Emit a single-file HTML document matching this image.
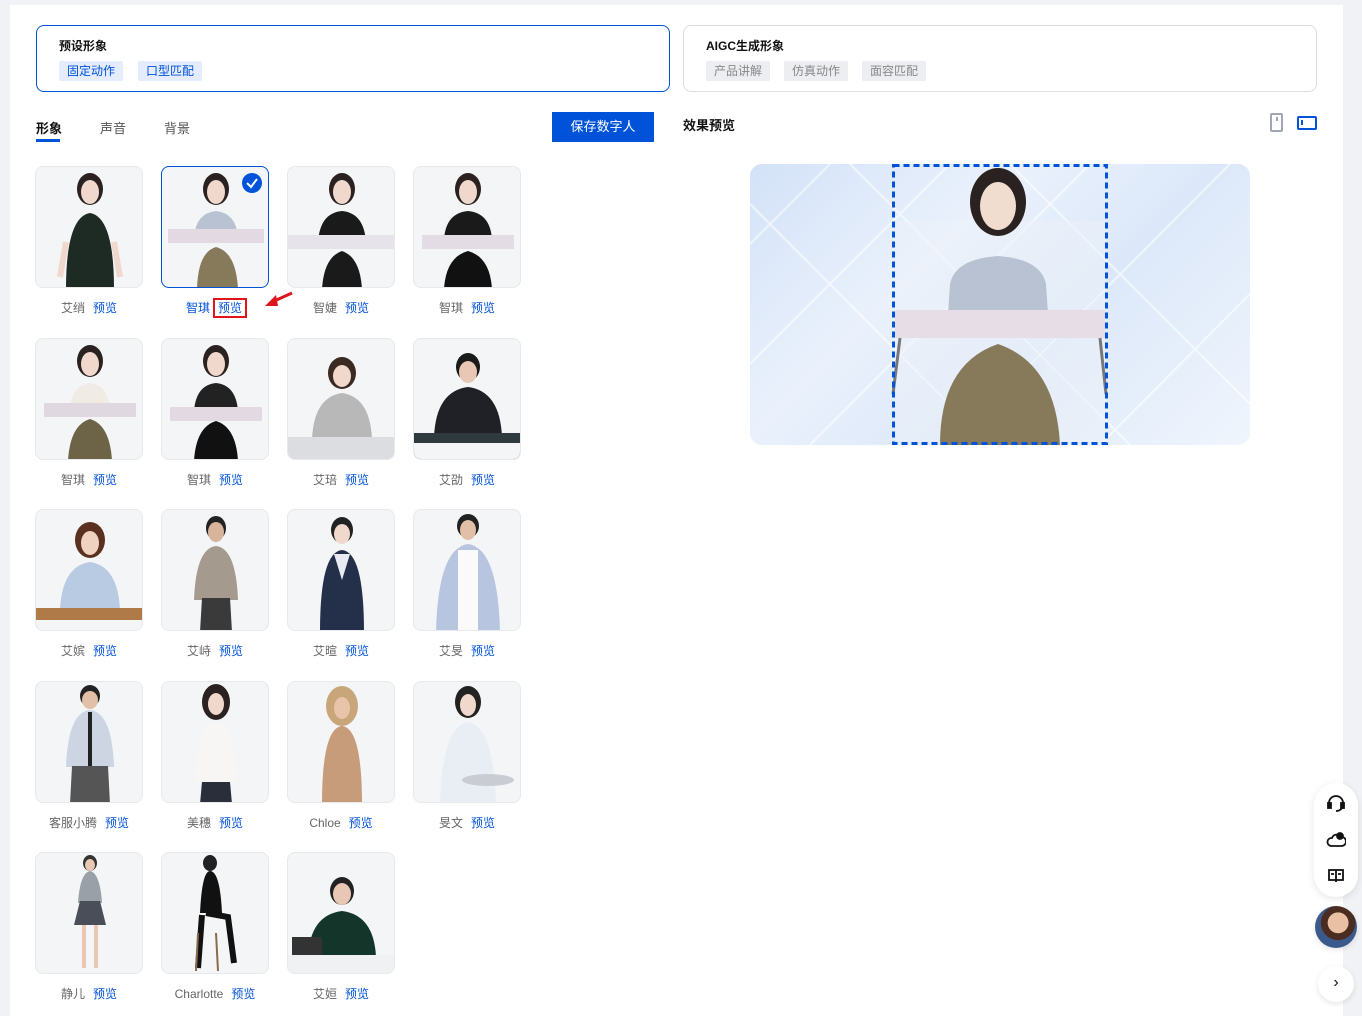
<!DOCTYPE html>
<html><head><meta charset="utf-8"><style>
*{margin:0;padding:0;box-sizing:border-box}
body{width:1362px;height:1016px;background:#f0f2f5;font-family:"Liberation Sans","Noto Sans CJK SC",sans-serif;position:relative;overflow:hidden;font-size:12px;color:#333}
.panel{position:absolute;left:10px;top:5px;width:1333px;height:1011px;background:#fff}
.a{position:absolute}
.box{border-radius:8px;border:1px solid #ddd}
.tag{position:absolute;height:20px;line-height:20px;padding:0 8px;font-size:12px;border-radius:2px}
.card{position:absolute;width:108px;height:122px;border-radius:8px;background:#f4f5f7;border:1px solid #e8e9ec;overflow:hidden}
.lab{position:absolute;width:140px;text-align:center;font-size:12px;color:#666}
.lab b{font-weight:normal;color:#0052d9;margin-left:8px}
</style></head><body>
<div class="panel"></div>

<div class="a box" style="left:36px;top:25px;width:634px;height:67px;border-color:#0052d9"></div>
<div class="a" style="left:59px;top:37px;font-size:12px;font-weight:bold;color:#111">预设形象</div>
<div class="tag" style="left:59px;top:61px;background:#e4ecfd;color:#0052d9">固定动作</div>
<div class="tag" style="left:138px;top:61px;background:#e4ecfd;color:#0052d9">口型匹配</div>

<div class="a box" style="left:683px;top:25px;width:634px;height:67px"></div>
<div class="a" style="left:706px;top:37px;font-size:12px;font-weight:bold;color:#111">AIGC生成形象</div>
<div class="tag" style="left:706px;top:61px;background:#eceef2;color:#888">产品讲解</div>
<div class="tag" style="left:784px;top:61px;background:#eceef2;color:#888">仿真动作</div>
<div class="tag" style="left:862px;top:61px;background:#eceef2;color:#888">面容匹配</div>

<div class="a" style="left:36px;top:118px;font-size:13px;color:#111;font-weight:bold">形象</div>
<div class="a" style="left:36px;top:139px;width:24px;height:3px;background:#0052d9"></div>
<div class="a" style="left:100px;top:118px;font-size:13px;color:#555">声音</div>
<div class="a" style="left:164px;top:118px;font-size:13px;color:#555">背景</div>
<div class="a" style="left:552px;top:112px;width:102px;height:30px;background:#0052d9;color:#fff;text-align:center;line-height:30px;font-size:13px">保存数字人</div>

<div class="a" style="left:683px;top:115px;font-size:13px;font-weight:bold;color:#111">效果预览</div>
<div class="a" style="left:1270px;top:113px;width:13px;height:19px;border:2px solid #a0a6b2;border-radius:2px"><div style="width:2px;height:4px;background:#a0a6b2;margin:2px auto"></div></div>
<div class="a" style="left:1297px;top:116px;width:20px;height:14px;border:2px solid #0052d9;border-radius:2px"><div style="width:2px;height:5px;background:#0052d9;margin:2px 0 0 2px"></div></div>

<!-- preview -->
<div class="a" style="left:750px;top:164px;width:500px;height:281px;border-radius:12px;overflow:hidden;background:linear-gradient(135deg,#d3e2f8 0%,#eaf1fc 35%,#dce8f9 60%,#f0f5fd 100%)">
<svg width="500" height="281" style="position:absolute;left:0;top:0">
<g stroke="#fff" stroke-opacity=".6" fill="none" stroke-width="2">
<path d="M0 80 L80 0 M0 200 L200 0 M60 281 L340 0 M200 281 L480 0 M350 281 L500 130 M0 40 L240 281 M100 0 L380 281 M260 0 L500 240"/></g>
<rect x="146" y="57" width="210" height="224" fill="#eef2f8" opacity=".5"/>
<ellipse cx="248" cy="38" rx="28" ry="34" fill="#2a2220"/>
<ellipse cx="248" cy="42" rx="18" ry="24" fill="#f1dcd0"/>
<path d="M200 120 Q205 95 248 92 Q291 95 296 120 L298 150 L198 150 Z" fill="#b9c2d2"/>
<rect x="145" y="146" width="210" height="28" fill="#e7dde6"/>
<path d="M190 281 Q190 200 248 180 Q306 200 310 281 Z" fill="#867a5a"/>
<path d="M150 174 L143 230 M350 174 L356 230" stroke="#777" stroke-width="3"/>
<rect x="143.5" y="1.5" width="213" height="278" fill="none" stroke="#0052d9" stroke-width="3" stroke-dasharray="6 4"/>
</svg></div>

<!-- cards -->
<svg width="0" height="0" style="position:absolute"><defs>
<g id="p"><ellipse cx="54" cy="22" rx="13" ry="16" fill="#2a2220"/><ellipse cx="54" cy="25" rx="9" ry="12" fill="#f0d8cc"/></g>
</defs></svg>

<div class="card" style="left:35px;top:166px"><svg width="108" height="122"><use href="#p"/><path d="M30 122 Q30 50 54 46 Q78 50 78 122Z" fill="#1e2a24"/><path d="M30 75 L24 110 M78 75 L84 110" stroke="#f0d8cc" stroke-width="6"/></svg></div>
<div class="card" style="left:161px;top:166px;border:1.5px solid #0052d9"><svg width="108" height="122"><use href="#p"/><path d="M32 70 Q34 46 54 44 Q74 46 76 70Z" fill="#b9c2d2"/><rect x="6" y="62" width="96" height="14" fill="#e3d9e2"/><path d="M35 122 Q36 85 54 80 Q74 85 76 122Z" fill="#867a5a"/><circle cx="90" cy="16" r="10" fill="#0052d9"/><path d="M85 16 L89 20 L95 12" stroke="#fff" stroke-width="2" fill="none"/></svg></div>
<div class="card" style="left:287px;top:166px"><svg width="108" height="122"><use href="#p"/><path d="M30 75 Q32 46 54 44 Q76 46 78 75Z" fill="#1a1a1a"/><rect x="0" y="68" width="108" height="14" fill="#e6e3ea"/><path d="M34 122 Q36 90 54 84 Q72 90 74 122Z" fill="#1a1a1a"/></svg></div>
<div class="card" style="left:413px;top:166px"><svg width="108" height="122"><use href="#p"/><path d="M30 72 Q32 46 54 44 Q76 46 78 72Z" fill="#1a1a1a"/><rect x="8" y="68" width="92" height="14" fill="#e3dce4"/><path d="M30 122 Q32 90 54 84 Q76 90 78 122Z" fill="#111"/></svg></div>

<div class="card" style="left:35px;top:338px"><svg width="108" height="122"><use href="#p"/><path d="M34 70 Q36 46 54 44 Q72 46 74 70Z" fill="#f1ebe6"/><rect x="8" y="64" width="92" height="14" fill="#e0d8e0"/><path d="M32 122 Q34 86 54 80 Q74 86 76 122Z" fill="#6d6447"/></svg></div>
<div class="card" style="left:161px;top:338px"><svg width="108" height="122"><use href="#p"/><path d="M32 72 Q34 46 54 44 Q74 46 76 72Z" fill="#222"/><rect x="8" y="68" width="92" height="14" fill="#e3d9e2"/><path d="M32 122 Q34 88 54 82 Q74 88 76 122Z" fill="#111"/></svg></div>
<div class="card" style="left:287px;top:338px"><svg width="108" height="122"><ellipse cx="54" cy="34" rx="14" ry="16" fill="#3a2a22"/><ellipse cx="54" cy="37" rx="9" ry="11" fill="#f0d8cc"/><path d="M24 100 Q26 58 54 54 Q82 58 84 100Z" fill="#b8b8b8"/><rect x="0" y="98" width="108" height="24" fill="#dcdde0"/></svg></div>
<div class="card" style="left:413px;top:338px"><svg width="108" height="122"><ellipse cx="54" cy="28" rx="12" ry="14" fill="#1a1a1a"/><ellipse cx="54" cy="33" rx="9" ry="11" fill="#e8c8b4"/><path d="M20 98 Q22 52 54 48 Q86 52 88 98Z" fill="#1f2126"/><rect x="0" y="94" width="108" height="28" fill="#2f3a3e"/><rect x="0" y="104" width="108" height="18" fill="#f4f5f7"/></svg></div>

<div class="card" style="left:35px;top:509px"><svg width="108" height="122"><ellipse cx="54" cy="30" rx="15" ry="18" fill="#5a3020"/><ellipse cx="54" cy="33" rx="9" ry="12" fill="#f0d2c0"/><path d="M24 100 Q26 56 54 52 Q82 56 84 100Z" fill="#b9cbe3"/><rect x="0" y="98" width="108" height="12" fill="#b07a48"/></svg></div>
<div class="card" style="left:161px;top:509px"><svg width="108" height="122"><ellipse cx="54" cy="18" rx="10" ry="12" fill="#222"/><ellipse cx="54" cy="22" rx="8" ry="10" fill="#d9b49c"/><path d="M32 90 Q34 38 54 36 Q74 38 76 90Z" fill="#a59a8e"/><path d="M38 122 L40 88 L68 88 L70 122Z" fill="#3a3a3a"/></svg></div>
<div class="card" style="left:287px;top:509px"><svg width="108" height="122"><ellipse cx="54" cy="20" rx="11" ry="13" fill="#222"/><ellipse cx="54" cy="24" rx="8" ry="10" fill="#f0d8cc"/><path d="M32 122 Q32 42 54 40 Q76 42 76 122Z" fill="#24304a"/><path d="M46 44 L54 70 L62 44Z" fill="#e8ecf2"/></svg></div>
<div class="card" style="left:413px;top:509px"><svg width="108" height="122"><ellipse cx="54" cy="16" rx="11" ry="12" fill="#222"/><ellipse cx="54" cy="20" rx="8" ry="10" fill="#e2c0a8"/><path d="M22 122 Q24 38 54 34 Q84 38 86 122Z" fill="#b7c5e0"/><rect x="44" y="40" width="20" height="82" fill="#fafafa"/></svg></div>

<div class="card" style="left:35px;top:681px"><svg width="108" height="122"><ellipse cx="54" cy="14" rx="10" ry="11" fill="#222"/><ellipse cx="54" cy="18" rx="8" ry="9" fill="#e2c0a8"/><path d="M30 85 Q32 30 54 28 Q76 30 78 85Z" fill="#cdd5e3"/><rect x="52" y="30" width="4" height="55" fill="#222"/><path d="M34 122 L36 84 L72 84 L74 122Z" fill="#555"/></svg></div>
<div class="card" style="left:161px;top:681px"><svg width="108" height="122"><ellipse cx="54" cy="20" rx="14" ry="18" fill="#2a2220"/><ellipse cx="54" cy="22" rx="8" ry="11" fill="#f0d8cc"/><path d="M34 100 Q34 42 54 40 Q74 42 74 100Z" fill="#f8f6f4"/><path d="M38 122 L40 100 L68 100 L70 122Z" fill="#2a2d3a"/></svg></div>
<div class="card" style="left:287px;top:681px"><svg width="108" height="122"><ellipse cx="54" cy="24" rx="16" ry="20" fill="#c8a67a"/><ellipse cx="54" cy="26" rx="8" ry="11" fill="#e8c4aa"/><path d="M34 122 Q34 46 54 44 Q74 46 74 122Z" fill="#c79c7a"/></svg></div>
<div class="card" style="left:413px;top:681px"><svg width="108" height="122"><ellipse cx="54" cy="20" rx="13" ry="16" fill="#222"/><ellipse cx="54" cy="23" rx="8" ry="11" fill="#f0d8cc"/><path d="M26 122 Q28 44 54 40 Q80 44 82 122Z" fill="#e9eef4"/><ellipse cx="74" cy="98" rx="26" ry="6" fill="#c9ccd2"/></svg></div>

<div class="card" style="left:35px;top:852px"><svg width="108" height="122"><ellipse cx="54" cy="10" rx="7" ry="8" fill="#333"/><ellipse cx="54" cy="12" rx="5" ry="6" fill="#e8c8b4"/><path d="M42 50 Q44 20 54 18 Q64 20 66 50Z" fill="#9aa0a8"/><path d="M38 72 L44 48 L64 48 L70 72Z" fill="#4a4e58"/><path d="M48 72 L48 115 M60 72 L60 115" stroke="#e8c8b4" stroke-width="4"/></svg></div>
<div class="card" style="left:161px;top:852px"><svg width="108" height="122"><ellipse cx="48" cy="10" rx="7" ry="8" fill="#222"/><path d="M38 60 Q40 18 48 18 Q58 18 60 60Z" fill="#111"/><path d="M44 60 L66 64 L72 110 M40 62 L36 115" stroke="#111" stroke-width="6" fill="none"/><path d="M36 80 L34 118 M54 80 L56 118" stroke="#8a6a4a" stroke-width="2"/></svg></div>
<div class="card" style="left:287px;top:852px"><svg width="108" height="122"><ellipse cx="54" cy="38" rx="12" ry="14" fill="#222"/><ellipse cx="54" cy="41" rx="9" ry="11" fill="#e8c8b4"/><path d="M20 104 Q22 62 54 58 Q86 62 88 104Z" fill="#14352a"/><rect x="4" y="84" width="30" height="20" fill="#333"/><rect x="0" y="102" width="108" height="20" fill="#f0f1f3"/></svg></div>

<div class="lab" style="left:19px;top:299px">艾绡<b>预览</b></div>
<div class="lab" style="left:145px;top:299px"><span style="color:#0052d9">智琪</span><b style="outline:2px solid #e0141d;outline-offset:1px;padding:0 2px;margin-left:6px">预览</b></div>
<svg class="a" style="left:262px;top:290px" width="32" height="20"><path d="M30 3 L10 12" stroke="#e0141d" stroke-width="3"/><path d="M3 16 L14 5 L16 16Z" fill="#e0141d"/></svg>
<div class="lab" style="left:271px;top:299px">智婕<b>预览</b></div>
<div class="lab" style="left:397px;top:299px">智琪<b>预览</b></div>
<div class="lab" style="left:19px;top:471px">智琪<b>预览</b></div>
<div class="lab" style="left:145px;top:471px">智琪<b>预览</b></div>
<div class="lab" style="left:271px;top:471px">艾琣<b>预览</b></div>
<div class="lab" style="left:397px;top:471px">艾劭<b>预览</b></div>
<div class="lab" style="left:19px;top:642px">艾嫔<b>预览</b></div>
<div class="lab" style="left:145px;top:642px">艾峙<b>预览</b></div>
<div class="lab" style="left:271px;top:642px">艾暄<b>预览</b></div>
<div class="lab" style="left:397px;top:642px">艾旻<b>预览</b></div>
<div class="lab" style="left:19px;top:814px">客服小腾<b>预览</b></div>
<div class="lab" style="left:145px;top:814px">美穗<b>预览</b></div>
<div class="lab" style="left:271px;top:814px">Chloe<b>预览</b></div>
<div class="lab" style="left:397px;top:814px">旻文<b>预览</b></div>
<div class="lab" style="left:19px;top:985px">静儿<b>预览</b></div>
<div class="lab" style="left:145px;top:985px">Charlotte<b>预览</b></div>
<div class="lab" style="left:271px;top:985px">艾姮<b>预览</b></div>

<!-- side float -->
<div class="a" style="left:1314px;top:783px;width:44px;height:114px;background:#fff;border-radius:22px;box-shadow:0 2px 8px rgba(0,0,0,.1)"></div>
<svg class="a" style="left:1326px;top:794px" width="20" height="100" fill="none" stroke="#111" stroke-width="1.8">
<path d="M3 12 V9 A7 7 0 0 1 17 9 V12"/><rect x="2" y="9" width="3" height="5" fill="#111"/><rect x="15" y="9" width="3" height="5" fill="#111"/><path d="M16 14 Q14 17 10 17"/>
<path d="M5 52 A4 4 0 0 1 6 44 A5 5 0 0 1 15 43 A4 4 0 0 1 16 52 Z"/><circle cx="14" cy="42" r="3" fill="#111"/>
<rect x="3" y="76" width="14" height="10"/><path d="M10 76 V88 M5 80 H8 M12 80 H15"/>
</svg>
<div class="a" style="left:1315px;top:906px;width:42px;height:42px;border-radius:50%;background:radial-gradient(circle at 55% 40%,#e9c0a4 0 30%,#4a2c20 31% 50%,#3b5a8c 51%);box-shadow:0 2px 6px rgba(0,0,0,.1)"></div>
<div class="a" style="left:1318px;top:966px;width:36px;height:36px;border-radius:50%;background:#fff;box-shadow:0 2px 6px rgba(0,0,0,.1);text-align:center;line-height:34px;font-size:16px;color:#111">›</div>
</body></html>
